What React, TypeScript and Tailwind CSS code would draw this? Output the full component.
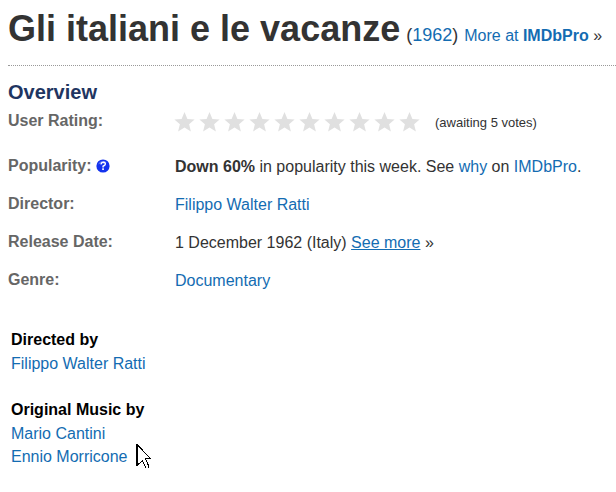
import type { ReactNode } from "react";

function Link({ children, className = "" }: { children: ReactNode; className?: string }) {
  return (
    <a href="#" className={`text-[#136cb2] ${className}`}>
      {children}
    </a>
  );
}

function Star() {
  return (
    <svg viewBox="0 0 25 24" className="h-6 w-[25px]" aria-hidden="true">
      <path
        d="M12.5 2 L15.4 8.9 L22.6 9.4 L17.1 14.2 L18.9 21.4 L12.5 17.6 L6.1 21.4 L7.9 14.2 L2.4 9.4 L9.6 8.9 Z"
        fill="#e0e0e0"
      />
    </svg>
  );
}

function HelpIcon() {
  return (
    <svg viewBox="0 0 14 14" className="h-3.5 w-3.5" aria-hidden="true">
      <circle cx="7" cy="7" r="6.6" fill="#1433ee" />
      <path d="M2.2 5.5 A5.2 5.2 0 0 1 11 3.6 Q6.5 2.5 2.2 5.5 Z" fill="#5d78f5" />
      <path
        d="M4.9 5.3 Q5.3 3.3 7.4 3.3 Q9.5 3.4 9.3 5.2 Q9.1 6.4 7.1 7.2 V8.4"
        fill="none"
        stroke="#fff"
        strokeWidth="1.5"
      />
      <rect x="6.2" y="9.3" width="1.7" height="1.7" fill="#fff" />
    </svg>
  );
}

function Pointer() {
  return (
    <svg
      viewBox="0 0 16 28"
      className="absolute -top-0.5 left-full ml-2 h-7 w-4"
      shapeRendering="crispEdges"
      aria-hidden="true"
    >
      <path
        d="M1 1.5 L14.5 15.5 H9.5 L13 24 Q13 26.5 10.5 26.5 L6.5 17.5 L1 22.5 Z"
        fill="#fff"
        stroke="#000"
        strokeWidth="1"
      />
      <path d="M1 1 V23" stroke="#000" strokeWidth="2" />
    </svg>
  );
}

function Row({ label, children, tall = false }: { label: ReactNode; children: ReactNode; tall?: boolean }) {
  return (
    <div className={`flex items-start ${tall ? "pb-5" : "pb-3.5"}`}>
      <dt className="flex w-[167px] shrink-0 items-center gap-1 font-bold leading-6 text-[#666]">{label}</dt>
      <dd className="pt-px leading-[23px]">{children}</dd>
    </div>
  );
}

export default function App() {
  return (
    <main className="bg-white pl-2 font-['Liberation_Sans',Arial,sans-serif] text-base text-[#333]">
      <header className="flex items-baseline whitespace-nowrap border-b border-dotted border-[#999] pt-1 pb-3">
        <h1 className="text-4xl font-bold leading-[49px]">Gli italiani e le vacanze</h1>
        <span className="ml-1.5 text-lg">
          (<Link>1962</Link>)
        </span>
        <span className="ml-1.5 text-base">
          <Link>
            More at <b>IMDbPro</b>
          </Link>{" "}
          »
        </span>
      </header>

      <section className="pt-3.5">
        <h2 className="text-xl font-bold leading-6 text-[#1f3561]">Overview</h2>
        <dl className="pt-[5px]">
          <Row label="User Rating:" tall>
            <div className="flex items-center">
              <div className="-ml-[3px] flex" role="img" aria-label="Not yet rated">
                {Array.from({ length: 10 }, (_, i) => (
                  <Star key={i} />
                ))}
              </div>
              <span className="ml-[13px] text-[13px]">(awaiting 5 votes)</span>
            </div>
          </Row>
          <Row
            label={
              <>
                Popularity: <HelpIcon />
              </>
            }
          >
            <b>Down 60%</b> in popularity this week. See <Link>why</Link> on <Link>IMDbPro</Link>.
          </Row>
          <Row label="Director:">
            <Link>Filippo Walter Ratti</Link>
          </Row>
          <Row label="Release Date:">
            1 December 1962 (Italy) <Link className="underline">See more</Link> »
          </Row>
          <Row label="Genre:">
            <Link>Documentary</Link>
          </Row>
        </dl>
      </section>

      <section className="flex flex-col gap-[23px] pt-[22px] pl-[3px] leading-[23px]">
        <div>
          <h3 className="font-bold leading-6 text-black">Directed by</h3>
          <Link>Filippo Walter Ratti</Link>
        </div>
        <div>
          <h3 className="font-bold leading-6 text-black">Original Music by</h3>
          <ul>
            <li>
              <Link>Mario Cantini</Link>
            </li>
            <li className="relative w-fit">
              <Link>Ennio Morricone</Link>
              <Pointer />
            </li>
          </ul>
        </div>
      </section>
    </main>
  );
}
